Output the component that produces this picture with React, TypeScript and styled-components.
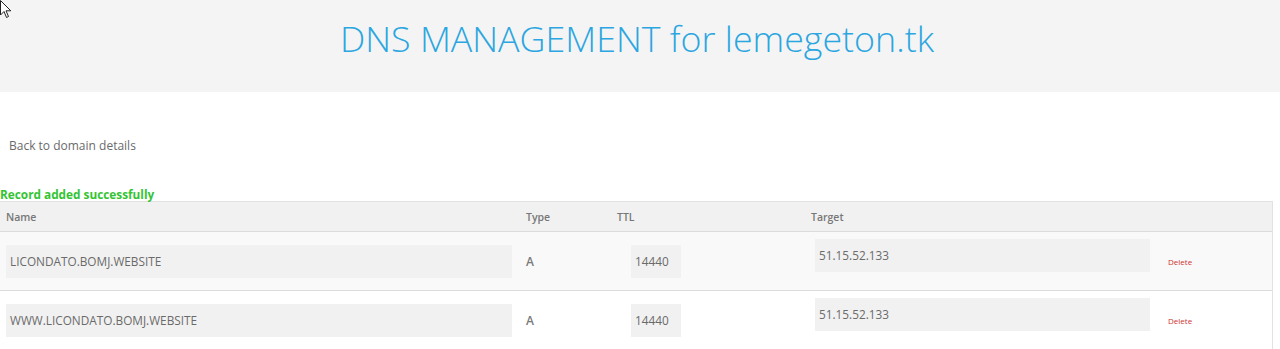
import React from "react";
import styled, { createGlobalStyle } from "styled-components";

const Global = createGlobalStyle`
  html, body { margin: 0; padding: 0; background: #fff; }
  body { font-family: "Open Sans", "Liberation Sans", sans-serif; color: #666; }
  * { box-sizing: border-box; }
`;

const Page = styled.div`
  position: relative;
  width: 1280px;
  height: 349px;
  overflow: hidden;
`;

const Cursor = styled.svg`
  position: absolute;
  left: 0;
  top: 0;
`;

const Header = styled.header`
  height: 92px;
  background: #f4f4f4;
  display: flex;
  justify-content: center;
  padding-top: 13px;
`;

const Title = styled.h1`
  margin: 0;
  font-family: "Open Sans", sans-serif;
  font-weight: 300;
  font-size: 35.8px;
  line-height: 50px;
  color: #2ba6e0;
  transform: translateX(-3px);
`;

const BackLink = styled.a`
  display: block;
  margin: 46px 0 0 9px;
  font-size: 12px;
  line-height: 16px;
  color: #6a6a6a;
  text-decoration: none;
`;

const Success = styled.div`
  margin-top: 33px;
  font-size: 11.8px;
  line-height: 14px;
  font-weight: 700;
  color: #33c433;
`;

const Table = styled.div`
  width: 1273px;
  border-right: 1px solid #e2e2e2;
  border-top: 1px solid #e2e2e2;
`;

const Row = styled.div<{ $head?: boolean; $alt?: boolean }>`
  display: grid;
  grid-template-columns: 520px 91px 194px 357px 1fr;
  height: ${(p) => (p.$head ? "30px" : "59px")};
  background: ${(p) => (p.$head ? "#f1f1f1" : p.$alt ? "#f9f9f9" : "#fff")};
  border-bottom: 1px solid #dcdcdc;
  align-items: center;
`;

const HeadCell = styled.div`
  padding-left: 6px;
  font-size: 10.5px;
  font-weight: 600;
  color: #777;
`;

const Cell = styled.div<{ $pad?: number; $shift?: number }>`
  padding-left: ${(p) => p.$pad ?? 6}px;
  display: flex;
  align-items: center;
  transform: translateY(${(p) => p.$shift ?? 0}px);
`;

const Field = styled.div<{ $w: number }>`
  width: ${(p) => p.$w}px;
  height: 33px;
  background: #f1f1f1;
  display: flex;
  align-items: center;
  padding-left: 4px;
  font-size: 11.8px;
  color: #6a6a6a;
`;

const TypeText = styled.span`
  font-size: 12px;
  font-weight: 600;
  color: #7a7a7a;
`;

const DeleteLink = styled.a`
  font-size: 8px;
  color: #cc3333;
  text-decoration: none;
`;

const records = [
  { name: "LICONDATO.BOMJ.WEBSITE", type: "A", ttl: "14440", target: "51.15.52.133" },
  { name: "WWW.LICONDATO.BOMJ.WEBSITE", type: "A", ttl: "14440", target: "51.15.52.133" },
];

export default function App() {
  return (
    <Page>
      <Global />
      <Header>
        <Title>DNS MANAGEMENT for lemegeton.tk</Title>
      </Header>
      <BackLink href="#">Back to domain details</BackLink>
      <Success>Record added successfully</Success>
      <Table>
        <Row $head>
          <HeadCell>Name</HeadCell>
          <HeadCell>Type</HeadCell>
          <HeadCell>TTL</HeadCell>
          <HeadCell>Target</HeadCell>
          <HeadCell />
        </Row>
        {records.map((r, i) => (
          <Row key={i} $alt={i === 0}>
            <Cell>
              <Field $w={506}>{r.name}</Field>
            </Cell>
            <Cell>
              <TypeText>{r.type}</TypeText>
            </Cell>
            <Cell $pad={20}>
              <Field $w={50}>{r.ttl}</Field>
            </Cell>
            <Cell $pad={10} $shift={-6}>
              <Field $w={335}>{r.target}</Field>
            </Cell>
            <Cell $pad={6}>
              <DeleteLink href="#">Delete</DeleteLink>
            </Cell>
          </Row>
        ))}
      </Table>
      <Cursor width="12" height="19" viewBox="0 0 12 19">
        <path d="M0.5 0.5 L0.5 15 L4 11.5 L6.5 17.5 L8.5 16.5 L6 10.8 L10.8 10.8 Z" fill="#fff" stroke="#222" strokeWidth="1" />
      </Cursor>
    </Page>
  );
}
